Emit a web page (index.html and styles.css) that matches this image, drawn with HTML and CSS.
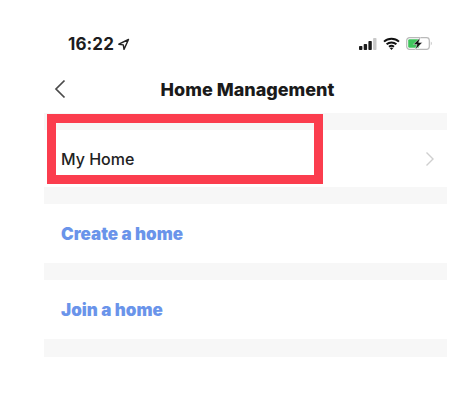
FILE: index.html
```html
<!DOCTYPE html>
<html lang="en">
<head>
<meta charset="utf-8">
<title>Home Management</title>
<link rel="stylesheet" href="styles.css">
</head>
<body>
<div class="screen">
  <div class="status">
    <div class="clock">
      <span class="time">16:22</span>
      <svg class="loc" width="13" height="13" viewBox="0 0 13 13"><path d="M11.5 1.5 1.8 6.2 6.3 6.9 7 11.4Z" fill="none" stroke="#222" stroke-width="1.4" stroke-linejoin="round"/></svg>
    </div>
    <div class="indicators">
      <svg width="18" height="12" viewBox="0 0 18 12"><rect x="0" y="8" width="3.4" height="4" rx=".8" fill="#1c1c1c"/><rect x="4.7" y="6" width="3.4" height="6" rx=".8" fill="#1c1c1c"/><rect x="9.4" y="3" width="3.4" height="9" rx=".8" fill="#1c1c1c"/><rect x="14.1" y="0" width="3.4" height="12" rx=".8" fill="#c9c9c9"/></svg>
      <svg width="17" height="13" viewBox="0 0 17 13"><path d="M1 4.6C5.2.7 11.8.7 16 4.6M3.6 7.3C6.4 4.8 10.6 4.8 13.4 7.3M6 9.8C7.4 8.7 9.6 8.7 11 9.8" fill="none" stroke="#111" stroke-width="1.9"/><path d="M8.5 13 6.7 11 Q8.5 9.8 10.3 11Z" fill="#111"/></svg>
      <svg width="27" height="13" viewBox="0 0 27 13"><rect x=".7" y=".7" width="22.6" height="11.6" rx="2.8" fill="#fff" stroke="#b9b9b9" stroke-width="1.2"/><rect x="2.2" y="2.2" width="11" height="8.6" rx="1.4" fill="#3fc45c"/><path d="M24.8 4.6C26 5 26 8 24.8 8.4Z" fill="#b9b9b9"/><path d="M14.4 .4 7.4 7.4H11L9.2 12.8 16.4 5.4H12.6Z" fill="#111" stroke="#fff" stroke-width=".5"/></svg>
    </div>
  </div>
  <div class="nav">
    <svg class="back" width="12" height="20" viewBox="0 0 12 20"><path d="M10.5 1.5 2 10l8.5 8.5" fill="none" stroke="#4a4a4a" stroke-width="1.7"/></svg>
    <h1 class="title">Home Management</h1>
  </div>
  <div class="list">
    <div class="band band-first"></div>
    <div class="row row-home">
      <span class="home-label">My Home</span>
      <svg class="chevron" width="10" height="16" viewBox="0 0 10 16"><path d="M1.5 1.5 8 8l-6.5 6.5" fill="none" stroke="#cfcfcf" stroke-width="1.4"/></svg>
    </div>
    <div class="band"></div>
    <div class="row row-action"><span class="action">Create a home</span></div>
    <div class="band"></div>
    <div class="row row-action"><span class="action">Join a home</span></div>
    <div class="band band-last"></div>
    <div class="highlight"></div>
  </div>
</div>
</body>
</html>
```
FILE: styles.css
```css
* { box-sizing: border-box; }
html, body { margin: 0; padding: 0; background: #fff; }
body { font-family: Inter, "Liberation Sans", sans-serif; color: #1c1c1e; }
.screen { width: 455px; height: 415px; overflow: hidden; padding: 0 8px 0 44px; }
.status { height: 54px; padding: 33px 14px 0 24px; display: flex; justify-content: space-between; align-items: center; }
.clock { display: flex; align-items: center; gap: 3px; }
.time { font-size: 17px; font-weight: 700; letter-spacing: .1px; }
.loc { margin-top: 1px; }
.indicators { display: flex; align-items: center; gap: 6px; }
.nav { height: 59px; position: relative; display: flex; align-items: center; justify-content: center; padding-top: 13px; padding-left: 4px; }
.back { position: absolute; left: 10px; top: 25px; }
.title { margin: 0; font-size: 18px; font-weight: 800; line-height: 20px; color: #1a1a1a; }
.list { position: relative; }
.band { height: 17px; background: #f7f7f7; }
.band-last { height: 18px; }
.row { display: flex; align-items: center; justify-content: space-between; padding-left: 17px; padding-right: 12px; background: #fff; }
.row-home { height: 57px; padding-top: 1px; }
.row-action { height: 59px; }
.home-label { font-size: 16px; font-weight: 500; color: #222; }
.action { font-size: 17px; font-weight: 900; color: #6a94ea; }
.highlight { position: absolute; left: 3px; top: 1px; width: 276px; height: 70px; border: 9px solid #fb3d4e; }
```
